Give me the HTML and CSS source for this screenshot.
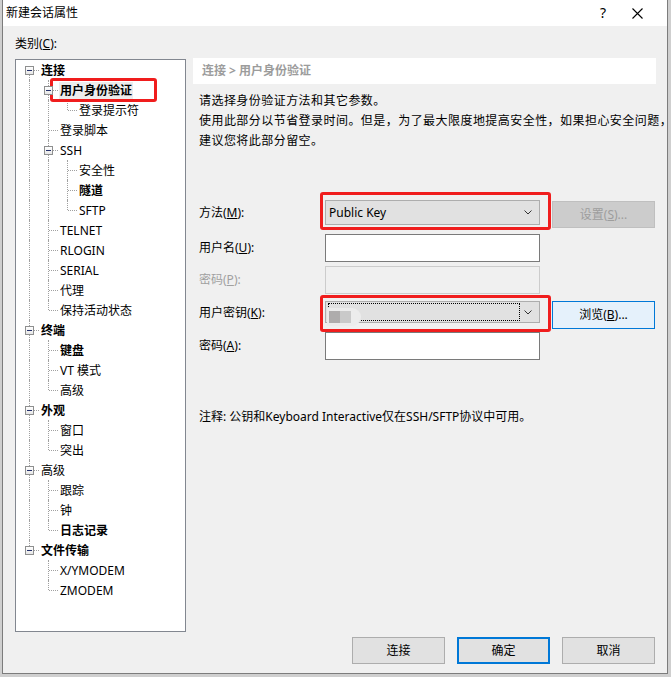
FILE: index.html
```html
<!DOCTYPE html>
<html lang="zh-CN">
<head>
<meta charset="utf-8">
<title>新建会话属性</title>
<link rel="stylesheet" href="styles.css">
</head>
<body>
<div class="win">
  <div class="titlebar">
    <span class="title">新建会话属性</span>
    <span class="help">?</span>
    <span class="close"><svg width="11" height="11" viewBox="0 0 11 11"><path d="M0.5 0.5 L10.5 10.5 M10.5 0.5 L0.5 10.5" stroke="#000" stroke-width="1.1" fill="none"/></svg></span>
  </div>
  <div class="body">
    <div class="main">
      <div class="left">
        <div class="cat">类别(<u>C</u>):</div>
        <div class="tree">
          <div class="row"><i class="c first"><b class="x"></b></i><span class="t bold">连接</span></div>
          <div class="row"><i class="g"></i><i class="c"><b class="x"></b></i><span class="t bold sel">用户身份验证</span></div>
          <div class="row"><i class="g"></i><i class="g"></i><i class="c last"></i><span class="t">登录提示符</span></div>
          <div class="row"><i class="g"></i><i class="c"></i><span class="t">登录脚本</span></div>
          <div class="row"><i class="g"></i><i class="c"><b class="x"></b></i><span class="t">SSH</span></div>
          <div class="row"><i class="g"></i><i class="g"></i><i class="c"></i><span class="t">安全性</span></div>
          <div class="row"><i class="g"></i><i class="g"></i><i class="c"></i><span class="t bold">隧道</span></div>
          <div class="row"><i class="g"></i><i class="g"></i><i class="c last"></i><span class="t">SFTP</span></div>
          <div class="row"><i class="g"></i><i class="c"></i><span class="t">TELNET</span></div>
          <div class="row"><i class="g"></i><i class="c"></i><span class="t">RLOGIN</span></div>
          <div class="row"><i class="g"></i><i class="c"></i><span class="t">SERIAL</span></div>
          <div class="row"><i class="g"></i><i class="c"></i><span class="t">代理</span></div>
          <div class="row"><i class="g"></i><i class="c last"></i><span class="t">保持活动状态</span></div>
          <div class="row"><i class="c"><b class="x"></b></i><span class="t bold">终端</span></div>
          <div class="row"><i class="g"></i><i class="c"></i><span class="t bold">键盘</span></div>
          <div class="row"><i class="g"></i><i class="c"></i><span class="t">VT 模式</span></div>
          <div class="row"><i class="g"></i><i class="c last"></i><span class="t">高级</span></div>
          <div class="row"><i class="c"><b class="x"></b></i><span class="t bold">外观</span></div>
          <div class="row"><i class="g"></i><i class="c"></i><span class="t">窗口</span></div>
          <div class="row"><i class="g"></i><i class="c last"></i><span class="t">突出</span></div>
          <div class="row"><i class="c"><b class="x"></b></i><span class="t">高级</span></div>
          <div class="row"><i class="g"></i><i class="c"></i><span class="t">跟踪</span></div>
          <div class="row"><i class="g"></i><i class="c"></i><span class="t">钟</span></div>
          <div class="row"><i class="g"></i><i class="c last"></i><span class="t bold">日志记录</span></div>
          <div class="row"><i class="c last"><b class="x"></b></i><span class="t bold">文件传输</span></div>
          <div class="row"><i class="e"></i><i class="c"></i><span class="t">X/YMODEM</span></div>
          <div class="row"><i class="e"></i><i class="c last"></i><span class="t">ZMODEM</span></div>
        </div>
      </div>
      <div class="right">
        <div class="crumb">连接 &gt; 用户身份验证</div>
        <div class="desc">请选择身份验证方法和其它参数。<br>使用此部分以节省登录时间。但是，为了最大限度地提高安全性，如果担心安全问题，<br>建议您将此部分留空。</div>
        <div class="form">
          <div class="frow r1">
            <span class="lbl">方法(<u>M</u>):</span>
            <div class="combo c1"><span class="val">Public Key</span><svg class="chev" width="8" height="5" viewBox="0 0 8 5"><path d="M0.5 0.5 L4 4 L7.5 0.5" stroke="#333" fill="none"/></svg></div>
            <div class="btn dis side">设置(<u>S</u>)...</div>
          </div>
          <div class="frow r2">
            <span class="lbl">用户名(<u>U</u>):</span>
            <div class="inp"></div>
          </div>
          <div class="frow r3">
            <span class="lbl disl">密码(<u>P</u>):</span>
            <div class="inp disi"></div>
          </div>
          <div class="frow r4">
            <span class="lbl">用户密钥(<u>K</u>):</span>
            <div class="combo c2"><div class="focus"><span class="blob"><i class="s1"></i><i class="s2"></i></span></div><svg class="chev" width="8" height="5" viewBox="0 0 8 5"><path d="M0.5 0.5 L4 4 L7.5 0.5" stroke="#333" fill="none"/></svg></div>
            <div class="btn hot side">浏览(<u>B</u>)...</div>
          </div>
          <div class="frow r5">
            <span class="lbl">密码(<u>A</u>):</span>
            <div class="inp"></div>
          </div>
        </div>
        <div class="note">注释: 公钥和Keyboard Interactive仅在SSH/SFTP协议中可用。</div>
      </div>
    </div>
    <div class="actions">
      <div class="btn">连接</div>
      <div class="btn def">确定</div>
      <div class="btn">取消</div>
    </div>
  </div>
  <div class="mark mk-tree"></div>
  <div class="mark mk-method"></div>
  <div class="mark mk-key"></div>
</div>
</body>
</html>
```
FILE: styles.css
```css
html, body {
  margin: 0;
  padding: 0;
  background: #cfcfcf;
}
body {
  font-family: "Noto Sans", "Noto Sans CJK SC", sans-serif;
  font-size: 12px;
  color: #000;
}
.win {
  position: relative;
  margin-left: 2px;
  width: 664px;
  height: 673px;
  border: 1px solid #7c7c7c;
  border-top: none;
  background: #f0f0f0;
}
.titlebar {
  height: 26px;
  background: #fff;
  display: flex;
  align-items: center;
}
.title {
  padding-left: 3px;
  line-height: 16px;
}
.help {
  margin-left: auto;
  font-size: 14px;
  line-height: 16px;
  margin-right: 26px;
}
.close {
  display: flex;
  margin-right: 24px;
}
.body {
  height: 647px;
  box-sizing: border-box;
  padding: 10px 12px 0 12px;
  display: flex;
  flex-direction: column;
}
.main {
  display: flex;
  gap: 7px;
}
.left {
  width: 171px;
  flex: none;
}
.cat {
  height: 16px;
  line-height: 16px;
  margin-bottom: 7px;
}
.tree {
  height: 573px;
  box-sizing: border-box;
  border: 1px solid #828790;
  background: #fff;
  padding-left: 4px;
}
.row {
  display: flex;
  align-items: center;
  height: 20px;
  white-space: nowrap;
}
.g, .c, .e {
  flex: none;
  width: 19px;
  height: 20px;
  display: grid;
  grid-template-columns: 10px 9px;
  grid-template-rows: 10px 10px;
}
.g::before, .c::before {
  content: "";
  grid-column: 1;
  grid-row: 1 / 3;
  border-right: 1px dotted #a0a0a0;
}
.c.last::before { grid-row: 1 / 2; }
.c.first::before { grid-row: 2 / 3; }
.c::after {
  content: "";
  grid-column: 2;
  grid-row: 2;
  border-top: 1px dotted #a0a0a0;
}
.x {
  grid-area: 1 / 1 / 3 / 3;
  align-self: start;
  justify-self: start;
  margin-top: 6px;
  margin-left: 5px;
  width: 9px;
  height: 9px;
  box-sizing: border-box;
  border: 1px solid #8e8f8f;
  background: linear-gradient(#ffffff, #e6e6e6);
  display: flex;
  align-items: center;
  justify-content: center;
  position: relative;
  z-index: 1;
}
.x::before {
  content: "";
  width: 5px;
  height: 1px;
  background: #23306b;
}
.t {
  margin-left: 1px;
  padding: 0 1px;
  line-height: 17px;
}
.bold { font-weight: bold; }
.sel { background: #ececec; }

.right {
  width: 463px;
  flex: none;
  padding-top: 22px;
}
.crumb {
  height: 26px;
  line-height: 26px;
  background: #fff;
  padding-left: 9px;
  color: #9c9c9c;
  font-weight: bold;
}
.desc {
  margin-top: 7px;
  padding-left: 6px;
  line-height: 20px;
  white-space: nowrap;
  letter-spacing: 0.45px;
}
.form {
  margin-top: 49px;
  padding-left: 6px;
}
.frow {
  display: flex;
  height: 28px;
}
.r1 { margin-bottom: 6px; }
.r2 { margin-bottom: 4px; }
.r3 { margin-bottom: 7px; }
.r4 { margin-bottom: 3px; }
.lbl {
  width: 126px;
  flex: none;
  line-height: 28px;
}
.r1 .lbl { line-height: 26px; }
.r4 .lbl { line-height: 24px; }
.disl { color: #a0a0a0; }
.inp {
  width: 215px;
  height: 28px;
  box-sizing: border-box;
  border: 1px solid #7a7a7a;
  background: #fff;
}
.disi {
  border-color: #cccccc;
  background: #f0f0f0;
}
.combo {
  width: 215px;
  box-sizing: border-box;
  border: 1px solid #adadad;
  background: #e1e1e1;
  display: flex;
  align-items: center;
}
.c1 { height: 25px; }
.c2 { height: 22px; }
.val {
  padding-left: 3px;
  line-height: 20px;
}
.chev {
  margin-left: auto;
  margin-right: 7px;
  flex: none;
}
.focus {
  margin-left: 2px;
  width: 192px;
  height: 18px;
  box-sizing: border-box;
  border: 1px dotted #000;
  display: flex;
  align-items: flex-end;
}
.blob {
  display: flex;
  margin-left: -2px;
  margin-bottom: -6px;
  padding: 3px 10px 3px 2px;
  background: #ececec;
  border-radius: 0 11px 11px 0;
  filter: blur(0.6px);
}
.blob i {
  display: block;
  width: 11px;
  height: 12px;
}
.blob .s1 { background: #aeacac; }
.blob .s2 { background: #c9c9c9; }
.btn {
  width: 93px;
  height: 27px;
  box-sizing: border-box;
  border: 1px solid #adadad;
  background: #e1e1e1;
  display: flex;
  align-items: center;
  justify-content: center;
  line-height: 16px;
}
.side {
  width: 103px;
  margin-left: 12px;
  margin-top: 1px;
}
.r4 .side { margin-top: 0; height: 28px; }
.dis {
  background: #cccccc;
  border-color: #bfbfbf;
  color: #9d9d9d;
}
.hot {
  background: #e5f1fb;
  border-color: #0078d7;
}
.def {
  border: 2px solid #0078d7;
}
.note {
  margin-top: 47px;
  padding-left: 6px;
  line-height: 20px;
}
.actions {
  margin-top: 5px;
  display: flex;
  justify-content: flex-end;
  gap: 12px;
}
.mark {
  position: absolute;
  box-sizing: border-box;
  border: 3px solid #f01d1d;
  border-radius: 3px;
}
.mk-tree { left: 47px; top: 78px; width: 107px; height: 24px; }
.mk-method { left: 317px; top: 192px; width: 231px; height: 38px; }
.mk-key { left: 317px; top: 295px; width: 231px; height: 37px; }
```
